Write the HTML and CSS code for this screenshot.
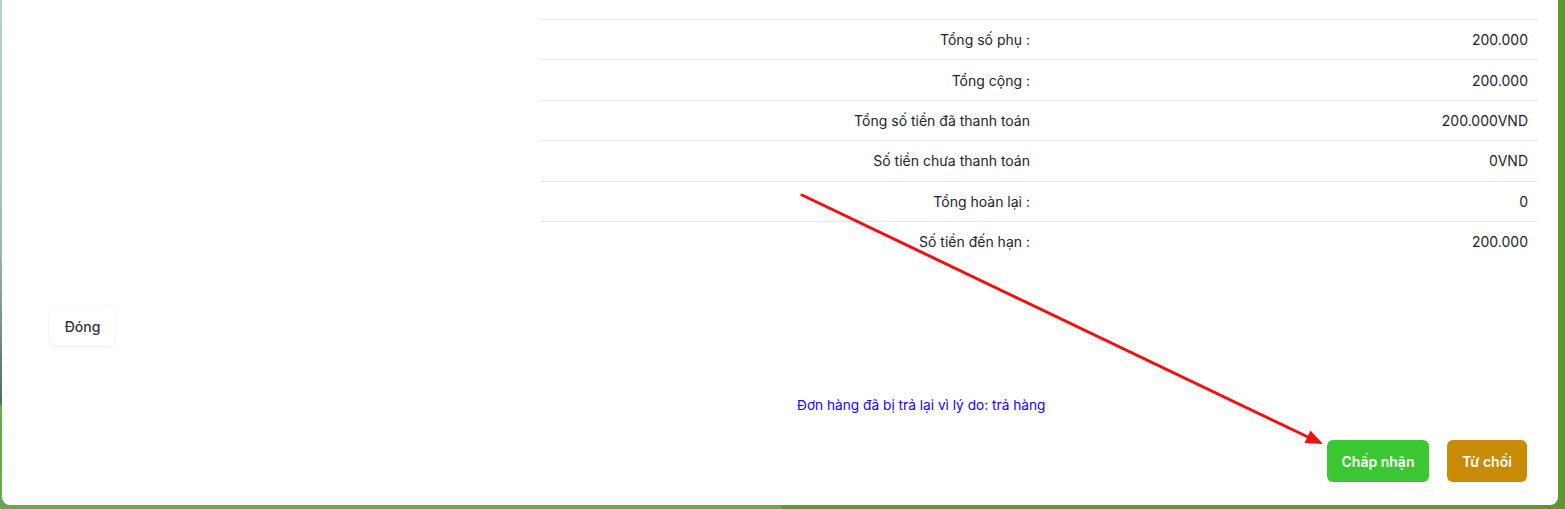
FILE: index.html
```html
<!DOCTYPE html>
<html lang="vi">
<head>
    <meta charset="UTF-8">
    <meta name="viewport" content="width=device-width, initial-scale=1.0">
    <title>Chi tiết đơn hàng</title>
    <link rel="stylesheet" href="styles.css">
</head>
<body>
    <div class="modal">
        <div class="summary-wrap">
            <div class="summary">
                <div class="row"><span>Tổng số phụ :</span><span>200.000</span></div>
                <div class="row"><span>Tổng cộng :</span><span>200.000</span></div>
                <div class="row"><span>Tổng số tiền đã thanh toán</span><span>200.000VND</span></div>
                <div class="row"><span>Số tiền chưa thanh toán</span><span>0VND</span></div>
                <div class="row"><span>Tổng hoàn lại :</span><span>0</span></div>
                <div class="row"><span>Số tiền đến hạn :</span><span>200.000</span></div>
            </div>
        </div>

        <div class="close-row">
            <button class="btn btn-close">Đóng</button>
        </div>

        <p class="return-note">Đơn hàng đã bị trả lại vì lý do: trả hàng</p>

        <div class="actions">
            <button class="btn btn-accept">Chấp nhận</button>
            <button class="btn btn-reject">Từ chối</button>
        </div>
    </div>

    <!-- annotation arrow drawn over the screenshot -->
    <svg class="arrow" width="1565" height="509" viewBox="0 0 1565 509">
        <line x1="802" y1="195" x2="1310" y2="438" stroke="#f01010" stroke-width="3" stroke-linecap="round"/>
        <polygon points="1323,444 1304.5,443 1310.5,430.5" fill="#f01010"/>
    </svg>
</body>
</html>
```

FILE: styles.css
```css
* {
    margin: 0;
    padding: 0;
    box-sizing: border-box;
    font-family: Inter, 'Noto Sans', sans-serif;
}

body {
    width: 1565px;
    height: 509px;
    overflow: hidden;
    position: relative;
    color: #212529;
    font-size: 14px;
    background:
        linear-gradient(to right, transparent 50%, #5c9a2e 50%),
        linear-gradient(to bottom, #bcd2c0 0%, #a9bcb2 45%, #7f968b 62%, #4f6c5e 79%, #6aa957 80%, #6aa553 100%);
}

.modal {
    margin-left: 2px;
    width: 1556px;
    height: 505px;
    background: #fff;
    border-radius: 0 0 8px 8px;
    padding-top: 19px;
}

.summary-wrap {
    padding-left: 538px;
    padding-right: 20px;
}

.row {
    display: grid;
    grid-template-columns: 1fr 1fr;
    border-top: 1px solid #e4e5e8;
    padding: 9.2px 10px 9.2px 0;
    line-height: 21px;
    text-align: right;
}

.row span:first-child {
    padding-right: 4px;
}

.close-row {
    padding-left: 48px;
    margin-top: 45px;
}

.btn {
    border: none;
    cursor: pointer;
    font-size: 14px;
    height: 40px;
    white-space: nowrap;
}

.btn-close {
    width: 65px;
    background: #fff;
    color: #333;
    font-weight: 500;
    border-radius: 8px;
    box-shadow: 0 1px 4px rgba(0, 0, 0, 0.07);
}

.return-note {
    margin-top: 50px;
    padding-left: 795px;
    color: #1a00ff;
    line-height: 18px;
    font-size: 13.7px;
}

.actions {
    display: flex;
    justify-content: flex-end;
    gap: 18px;
    padding-right: 31px;
    margin-top: 26px;
}

.btn-accept,
.btn-reject {
    height: 42px;
    color: #fff;
    font-weight: 600;
    border-radius: 6px;
    padding: 0;
    text-align: center;
}

.btn-accept {
    width: 102px;
    background: #3ac732;
}

.btn-reject {
    width: 80px;
    background: #c98a05;
}

.arrow {
    position: absolute;
    top: 0;
    left: 0;
    pointer-events: none;
}
```
